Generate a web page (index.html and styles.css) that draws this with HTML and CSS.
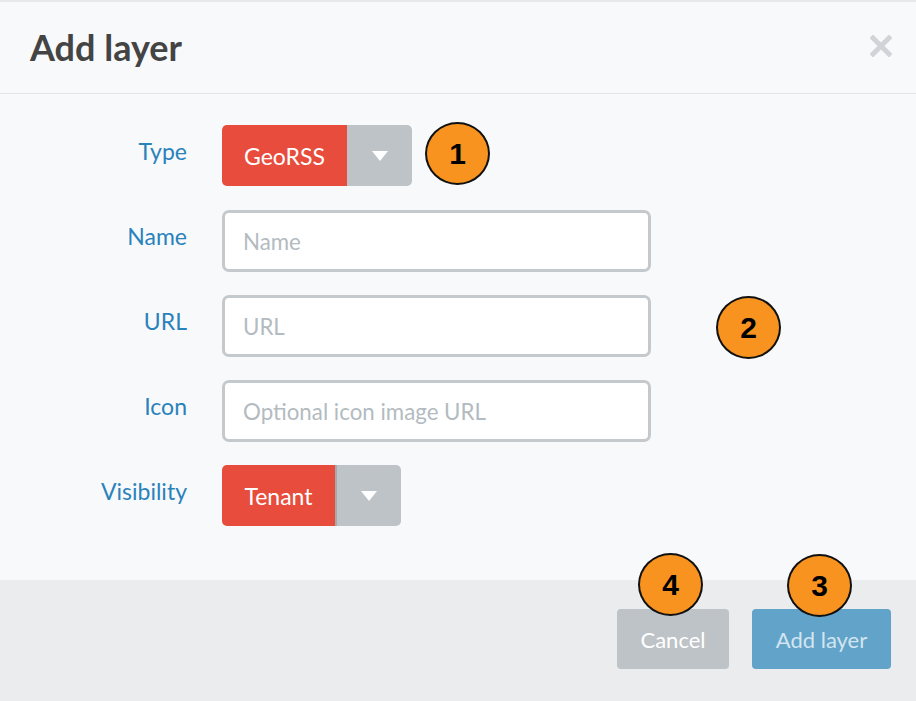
FILE: index.html
```html
<!DOCTYPE html>
<html>
<head>
<meta charset="utf-8">
<link rel="stylesheet" href="styles.css">
</head>
<body>
<div class="modal">
  <div class="header">
    <h1 class="title">Add layer</h1>
    <svg class="close" width="22" height="22" viewBox="0 0 22 22"><path d="M3 3 L19 19 M19 3 L3 19" stroke="#d0d4d8" stroke-width="5" stroke-linecap="square"/></svg>
  </div>
  <div class="body">
    <div class="row">
      <label class="label">Type</label>
      <div class="select select-type">
        <span class="select-value">GeoRSS</span>
        <span class="select-caret"><svg width="16" height="10" viewBox="0 0 16 10"><path d="M0 0 H16 L8 10 Z" fill="#fff"/></svg></span>
      </div>
    </div>
    <div class="row">
      <label class="label">Name</label>
      <input class="input" type="text" placeholder="Name">
    </div>
    <div class="row">
      <label class="label">URL</label>
      <input class="input" type="text" placeholder="URL">
    </div>
    <div class="row">
      <label class="label">Icon</label>
      <input class="input" type="text" placeholder="Optional icon image URL">
    </div>
    <div class="row">
      <label class="label">Visibility</label>
      <div class="select select-vis">
        <span class="select-value">Tenant</span>
        <span class="select-caret caret-split"><svg width="16" height="10" viewBox="0 0 16 10"><path d="M0 0 H16 L8 10 Z" fill="#fff"/></svg></span>
      </div>
    </div>
  </div>
  <div class="footer">
    <button class="btn btn-cancel">Cancel</button>
    <button class="btn btn-add">Add layer</button>
  </div>
  <span class="badge b1">1</span>
  <span class="badge b2">2</span>
  <span class="badge b3">3</span>
  <span class="badge b4">4</span>
</div>
</body>
</html>
```
FILE: styles.css
```css
html, body {
  margin: 0;
  padding: 0;
  background: #f8f9fb;
}
.modal {
  position: relative;
  width: 916px;
  height: 701px;
  display: flex;
  flex-direction: column;
  font-family: Lato, "Liberation Sans", sans-serif;
  background: #f8f9fb;
  border-top: 2px solid #e6e8eb;
  box-sizing: border-box;
}
.header {
  height: 92px;
  box-sizing: border-box;
  border-bottom: 1px solid #e4e6e9;
  display: flex;
  align-items: center;
  justify-content: space-between;
  padding: 0 24px 0 30px;
}
.title {
  margin: 0;
  font-size: 36px;
  font-weight: 700;
  color: #444;
  position: relative;
  top: -1px;
}
.close {
  display: block;
  position: relative;
  top: -2px;
}
.body {
  flex: 1;
  padding-top: 31px;
  display: flex;
  flex-direction: column;
  gap: 23px;
}
.row {
  display: flex;
  align-items: flex-start;
  gap: 35px;
  height: 62px;
}
.label {
  width: 187px;
  text-align: right;
  color: #2a82bb;
  font-size: 23px;
  line-height: 52px;
}
.select {
  display: flex;
  height: 61px;
  border-radius: 5px;
  overflow: hidden;
  font-size: 23px;
}
.select-value {
  background: #e74c3c;
  color: #fff;
  display: flex;
  align-items: center;
  justify-content: center;
}
.select-type .select-value { width: 125px; }
.select-vis .select-value { width: 113px; }
.select-caret {
  background: #bdc3c7;
  display: flex;
  align-items: center;
  justify-content: center;
  width: 65px;
}
.caret-split {
  border-left: 2px solid #a3aab0;
  width: 66px;
  box-sizing: border-box;
}
.input {
  width: 429px;
  height: 62px;
  box-sizing: border-box;
  border: 3px solid #c4c9cd;
  border-radius: 7px;
  background: #fff;
  padding: 0 18px;
  font-family: Lato, "Liberation Sans", sans-serif;
  font-size: 22.3px;
  color: #333;
  outline: none;
}
.input::placeholder {
  color: #b3bbc1;
}
.footer {
  height: 121px;
  background: #ebecee;
  display: flex;
  justify-content: flex-end;
  align-items: flex-start;
  gap: 23px;
  padding: 29px 25px 0 0;
  box-sizing: border-box;
}
.btn {
  height: 60px;
  border: none;
  border-radius: 4px;
  font-family: Lato, "Liberation Sans", sans-serif;
  font-size: 22px;
  padding: 0;
}
.btn-cancel {
  width: 112px;
  background: #bec3c7;
  color: #fff;
}
.btn-add {
  width: 139px;
  background: #62a3c9;
  color: #d3e5f0;
}
.badge {
  position: absolute;
  width: 61px;
  height: 59px;
  border: 2px solid #111;
  border-radius: 50%;
  background: #f7931e;
  color: #000;
  font-family: "Liberation Sans", Arial, sans-serif;
  font-weight: 700;
  font-size: 30px;
  display: flex;
  align-items: center;
  justify-content: center;
}
.b1 { left: 425px; top: 120px; }
.b2 { left: 716px; top: 294px; }
.b3 { left: 787px; top: 552px; }
.b4 { left: 638px; top: 551px; }
```
